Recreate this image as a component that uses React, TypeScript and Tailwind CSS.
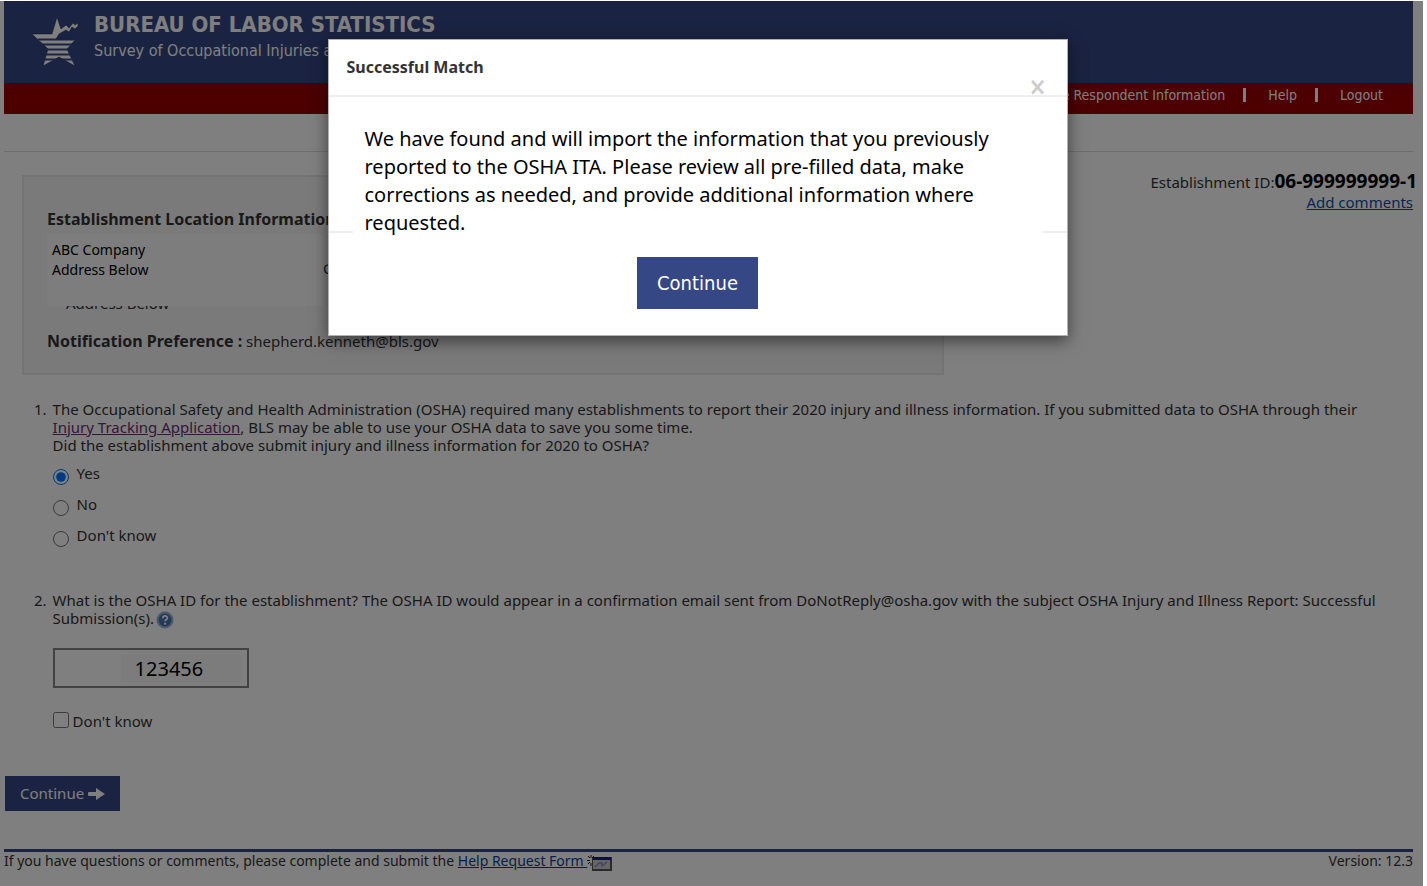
const StarLogo = () => (
  <svg className="h-[54px] w-12" viewBox="0 0 48 54">
    <path
      d="M0 21h20l5-17 4 12 5-4 3 3 4-5 2 2 3-2v3l-3 3-3-2-3 5-3-2-7 4-3 5h20L35 36l8 17-16-9-16 9 5-17z"
      fill="#fff"
      stroke="#1b2342"
      strokeWidth="0.5"
    />
    <path d="M6 26.500h38M8 31.500h34M12 36.500h28M12 41.500h28M10 46.500h34" stroke="#364785" strokeWidth="1.800" />
  </svg>
);

const ArrowIcon = () => (
  <svg className="h-3 w-[17px]" viewBox="0 0 17 12" fill="currentColor">
    <path d="M1 4h7V0l9 6-9 6V8H1a1 1 0 0 1-1-1V5a1 1 0 0 1 1-1z" />
  </svg>
);

const HelpIcon = () => (
  <svg className="ml-0.5 inline h-[18px] w-[18px] align-[-5px]" viewBox="0 0 18 18">
    <circle cx="9" cy="9" r="8.5" fill="#9db4d6" />
    <circle cx="9" cy="9" r="6.5" fill="#4a72b0" />
    <path d="M6.8 7.2c0-3 4.6-3 4.6-.3 0 1.600-2.300 1.600-2.300 3.400" fill="none" stroke="#fff" strokeWidth="1.700" />
    <circle cx="9.100" cy="12.700" r="1.100" fill="#fff" />
  </svg>
);

const FormIcon = () => (
  <svg className="inline h-4 w-[25px] align-[-5px]" viewBox="0 0 25 16">
    <path d="M5 2h20v14H5z" fill="#555" />
    <path d="M6 3h17v11H6z" fill="#ccc" />
    <path d="M6 2h18v3H6z" fill="#1b1b9c" />
    <path d="M8 12l4-4h3v3l5-4" fill="none" stroke="#8888cc" strokeWidth="1.500" />
    <path d="M0 5.500h3M4 0v3M1 1l2 2M7 1L5 3M1 9l2-2M4 8v3" stroke="#222" />
  </svg>
);

const answers = ['Yes', 'No', "Don't know"];

function Header() {
  return (
    <header className="font-['DejaVu_Sans_Condensed','DejaVu_Sans',sans-serif] text-white">
      <div className="flex h-[82px] bg-[#364785] pl-7">
        <div className="pt-3">
          <StarLogo />
        </div>
        <div className="pl-3.5 pt-2.5">
          <h1 className="text-[22px] leading-7 font-bold">BUREAU OF LABOR STATISTICS</h1>
          <p className="text-base leading-6">Survey of Occupational Injuries and Illnesses</p>
        </div>
      </div>
      <nav className="flex h-[31px] justify-end bg-[#990000] pr-[30px] text-sm leading-6">
        <a href="#respondent">Change Respondent Information</a>
        <span className="mt-[5px] mr-[22px] ml-[18px] h-3.5 w-[3px] bg-white" />
        <a href="#help">Help</a>
        <span className="mt-[5px] mr-[22px] ml-[18px] h-3.5 w-[3px] bg-white" />
        <a href="#logout">Logout</a>
      </nav>
    </header>
  );
}

function Location() {
  return (
    <section className="ml-[18px] h-[200px] w-[922px] border-2 border-[#e8e8e8] bg-[#f5f5f5] px-[23px] pt-[30px]">
      <h2 className="text-base leading-6 font-bold">Establishment Location Information</h2>
      <div className="mt-[3px] flex">
        <div className="h-[72px] w-[276px] bg-[#fbfbfb] pt-1.5 pl-[5px] text-sm leading-5 text-black">
          <p>ABC Company</p>
          <p>Address Below</p>
        </div>
        <p className="pt-6 text-[15px] leading-5">Contact</p>
      </div>
      <div className="flex h-1.5 items-end overflow-hidden pl-[19px] text-[15px] leading-[18px]">
        <p>Address Below</p>
      </div>
      <p className="mt-[17px] text-[15px] leading-6">
        <b className="text-base leading-6">Notification Preference :</b> shepherd.kenneth@bls.gov
      </p>
    </section>
  );
}

function Questions() {
  return (
    <form id="survey" className="pl-[30px] text-[15px] leading-[18px]">
      <div className="flex gap-1.5 pr-7">
        <span>1.</span>
        <fieldset>
          <p>
            The Occupational Safety and Health Administration (OSHA) required many establishments to report their 2020 injury and illness information. If you submitted data to OSHA through their{' '}
            <a href="#ita" className="text-[#6b3070] underline">Injury Tracking Application</a>, BLS may be able to use your OSHA data to save you some time.
            <br />
            Did the establishment above submit injury and illness information for 2020 to OSHA?
          </p>
          <div className="mt-2">
            {answers.map((answer) => (
              <label key={answer} className="flex h-[31px] gap-2">
                <input type="radio" name="submitted" defaultChecked={answer === 'Yes'} className="mt-[7px] size-4" />
                <span className="pt-0.5">{answer}</span>
              </label>
            ))}
          </div>
        </fieldset>
      </div>
      <div className="mt-9 flex gap-1.5">
        <span>2.</span>
        <div>
          <label htmlFor="osha-id">
            What is the OSHA ID for the establishment? The OSHA ID would appear in a confirmation email sent from DoNotReply@osha.gov with the subject OSHA Injury and Illness Report: Successful Submission(s).
          </label>
          <HelpIcon />
          <input
            id="osha-id"
            defaultValue="123456"
            className="mt-[19px] block h-10 w-[196px] border-2 border-[#858585] bg-[linear-gradient(#f8f8f8,#f8f8f8)] bg-[length:120px_28px] bg-[position:66px_5px] bg-no-repeat pr-8 pl-20 text-xl text-black"
          />
          <label className="mt-6 flex gap-1">
            <input type="checkbox" className="size-4" />
            <span>Don't know</span>
          </label>
        </div>
      </div>
    </form>
  );
}

function MatchDialog() {
  return (
    <div className="absolute top-px right-1 bottom-0 left-0 bg-black/50 pr-7">
      <div role="dialog" aria-labelledby="match-title" className="mx-auto mt-[38px] h-[297px] w-[740px] border border-black/30 bg-white shadow-[0_5px_15px_rgba(0,0,0,0.5)]">
        <div className="flex h-[57px] justify-between border-b-2 border-[#eeeeee] pr-5 pl-[18px]">
          <h2 id="match-title" className="pt-[15px] text-base leading-6 font-bold">Successful Match</h2>
          <button aria-label="Close" className="self-end pb-0.5 font-['DejaVu_Sans_Condensed','DejaVu_Sans',sans-serif] text-2xl leading-3 font-bold text-[#ccc]">×</button>
        </div>
        <p className="px-9 pt-7 text-xl leading-7 text-black">
          We have found and will import the information that you previously reported to the OSHA ITA. Please review all pre-filled data, make corrections as needed, and provide additional information where requested.
        </p>
        <div className="-mt-1.5 flex justify-between">
          <span className="h-0.5 w-6 bg-[#eee]" />
          <span className="h-0.5 w-6 bg-[#eee]" />
        </div>
        <div className="mt-6 flex justify-center">
          <button className="h-[52px] bg-[#364785] px-5 font-['DejaVu_Sans_Condensed','DejaVu_Sans',sans-serif] text-xl text-white">Continue</button>
        </div>
      </div>
    </div>
  );
}

export default function App() {
  return (
    <div className="relative min-h-screen overflow-hidden bg-white pt-px pr-1 font-['Noto_Sans',sans-serif] text-[#333]">
      <div className="pr-2.5 pl-1">
        <Header />
        <hr className="mt-[37px] border-[#ddd]" />
        <div className="mt-[23px] flex justify-between">
          <Location />
          <div className="-mt-1 text-right text-[15px] leading-5">
            <p className="-mr-1">Establishment ID:<b className="text-[19px] leading-5 text-black">06-999999999-1</b></p>
            <a href="#comments" className="text-[#0b4fa8] underline">Add comments</a>
          </div>
        </div>
        <div className="mt-[25px]">
          <Questions />
        </div>
        <button form="survey" type="button" className="mt-[46px] ml-px flex h-[35px] items-center gap-1 bg-[#364785] px-[15px] text-[15px] text-white">
          Continue <ArrowIcon />
        </button>
        <footer className="mt-[38px] flex justify-between border-t-3 border-[#364785] text-sm leading-[18px]">
          <p>
            If you have questions or comments, please complete and submit the <a href="#request" className="text-[#0b3f98] underline">Help Request Form </a>
            <FormIcon />
          </p>
          <p>Version: 12.3</p>
        </footer>
      </div>
      <MatchDialog />
    </div>
  );
}
